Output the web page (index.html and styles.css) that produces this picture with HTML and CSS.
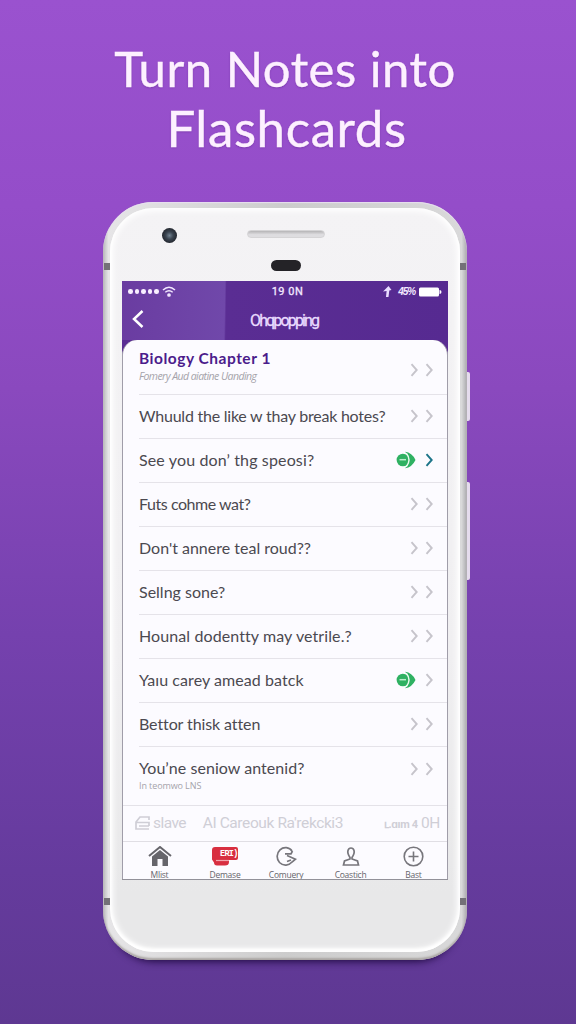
FILE: index.html
```html
<!DOCTYPE html>
<html lang="en">
<head>
<meta charset="utf-8">
<title>Turn Notes into Flashcards</title>
<link rel="stylesheet" href="styles.css">
</head>
<body>
<svg class="defs" width="0" height="0">
  <symbol id="chev" viewBox="0 0 9 14"><path d="M1.500 1.200 6.700 7l-5.200 5.800" fill="none" stroke="currentColor" stroke-width="1.900"/></symbol>
  <symbol id="done" viewBox="0 0 20 18"><path d="M9 .8q7 .7 10.500 8.200Q16 16.500 9 17.200 13 14 13 9T9 .8z" fill="#2fb162"/><circle cx="6.900" cy="9" r="6.300" fill="#2fb162"/><path d="M3.500 8.700h6.500" stroke="#bcebcc" stroke-width="1.500"/><path d="M10.300 2.300q5.400 6.700 0 13.400" fill="none" stroke="#e9faee" stroke-width="1.400"/></symbol>
</svg>
<main class="page">
  <h1 class="headline"><span class="h-a">Turn Notes into</span><span class="h-b">Flashcards</span></h1>
  <div class="phone">
    <i class="band tl"></i><i class="band tr"></i><i class="band bl"></i><i class="band br"></i>
    <i class="key power"></i><i class="key volume"></i>
    <div class="face">
      <i class="camera"></i><i class="speaker"></i><i class="sensor"></i>
      <section class="screen">
        <header class="top">
          <div class="status">
            <div class="signal"><i></i><i></i><i></i><i></i><i></i>
              <svg width="14" height="11" viewBox="0 0 14 11" fill="none" stroke="#f3e9ff" stroke-width="1.500"><path d="M1 4Q7-1.500 13 4M3.300 6.300q3.700-3.200 7.400 0"/><circle cx="7" cy="9" r="1.100" fill="#f3e9ff"/></svg>
            </div>
            <span class="clock">19 0N</span>
            <div class="power-info">
              <svg width="9" height="11" viewBox="0 0 9 11"><path d="M5.500 0 8.500 4 6.300 4.500 5.500 11H3l.6-6L0 5.500z" fill="#e9dcff"/></svg>
              <span class="pct">45%</span>
              <svg width="23" height="10" viewBox="0 0 23 10" fill="#fff"><rect width="20" height="9" y=".5" rx="1.500"/><path d="M20.500 3q2 0 2 2t-2 2z"/></svg>
            </div>
          </div>
          <div class="nav">
            <svg class="back" width="12" height="18" viewBox="0 0 12 18"><path d="M10.500 1 2 9l8.500 8" fill="none" stroke="#fff" stroke-width="2.500"/></svg>
            <span class="nav-title">Ohqpopping</span>
          </div>
        </header>
        <div class="sheet">
          <div class="row first"><div class="copy"><b class="deck">Biology Chapter 1</b><small class="sub s1">Fomery Aud aiatine Uanding</small></div><div class="ends"><svg class="chev"><use href="#chev"/></svg><svg class="chev"><use href="#chev"/></svg></div></div>
          <div class="row"><span class="q q1">Whuuld the like w thay break hotes?</span><div class="ends"><svg class="chev"><use href="#chev"/></svg><svg class="chev"><use href="#chev"/></svg></div></div>
          <div class="row"><span class="q q2">See you don’ thg speosi?</span><div class="ends"><svg class="done"><use href="#done"/></svg><svg class="chev teal"><use href="#chev"/></svg></div></div>
          <div class="row"><span class="q q3">Futs cohme wat?</span><div class="ends"><svg class="chev"><use href="#chev"/></svg><svg class="chev"><use href="#chev"/></svg></div></div>
          <div class="row"><span class="q q4">Don't annere teal roud??</span><div class="ends"><svg class="chev"><use href="#chev"/></svg><svg class="chev"><use href="#chev"/></svg></div></div>
          <div class="row"><span class="q q5">Sellng sone?</span><div class="ends"><svg class="chev"><use href="#chev"/></svg><svg class="chev"><use href="#chev"/></svg></div></div>
          <div class="row"><span class="q q6">Hounal dodentty may vetrile.?</span><div class="ends"><svg class="chev"><use href="#chev"/></svg><svg class="chev"><use href="#chev"/></svg></div></div>
          <div class="row"><span class="q q7">Yaıu carey amead batck</span><div class="ends"><svg class="done"><use href="#done"/></svg><svg class="chev"><use href="#chev"/></svg></div></div>
          <div class="row"><span class="q q8">Bettor thisk atten</span><div class="ends"><svg class="chev"><use href="#chev"/></svg><svg class="chev"><use href="#chev"/></svg></div></div>
          <div class="row last"><div class="copy"><span class="q q9">You’ne seniow antenid?</span><small class="sub s2">In teomwo LNS</small></div><div class="ends"><svg class="chev"><use href="#chev"/></svg><svg class="chev"><use href="#chev"/></svg></div></div>
          <div class="tools">
            <svg width="17" height="16" viewBox="0 0 17 16" fill="none" stroke="#cfced6" stroke-width="1.700"><path d="M15 5V2H6L2 7v7h13M2 7.500h13V11M5 11h10"/></svg>
            <span class="save">sIave</span><span class="career">AI Careouk Ra'rekcki3</span><span class="count"><b>ւ.ɑım 4</b> 0H</span>
          </div>
          <nav class="tabs">
            <div class="tab"><svg width="24" height="21" viewBox="0 0 24 21"><path d="M1 10 12 1l11 9" fill="none" stroke="#66656b" stroke-width="2"/><path d="M4 10.500 12 4l8 6.500V20h-5.500v-7h-5v7H4z" fill="#66656b"/></svg><span>Mlist</span></div>
            <div class="tab"><svg width="28" height="21" viewBox="0 0 28 21"><path d="M4 1h21q2 0 2 2v9q0 2-2 2h-7v2q0 3.500-4 3.500H6q-3 0-3-3l-2-3V4q0-3 3-3z" fill="#d82f40"/><path d="M5 14.500h13" stroke="#f3a5ad" stroke-width="1.200"/><text class="badge" x="9" y="10">ERI)</text></svg><span>Demase</span></div>
            <div class="tab"><svg width="22" height="21" viewBox="0 0 22 21" fill="none" stroke="#77767c" stroke-width="1.700"><path d="M17 5C14.500 1 8.500.5 5 3.800S1.200 13 4.500 16.500c4 4 9.500 3 12.500-.5l3.500-2.800L12 9.500M10 7.800h6L17.500 5M12 15.500l4-1.500"/></svg><span>Comuery</span></div>
            <div class="tab"><svg width="20" height="21" viewBox="0 0 20 21" fill="none" stroke="#77767c" stroke-width="1.700"><path d="M9 11.500C4.800 5.500 7.500 2 10 2s5.200 3.500 1 9.500v1.500l5.500 2 1 4H2.500l1-4L9 13z"/></svg><span>Coastich</span></div>
            <div class="tab"><svg width="21" height="21" viewBox="0 0 21 21" fill="none" stroke="#77767c" stroke-width="1.600"><circle cx="10.500" cy="10.500" r="9.300"/><path d="M5.500 10.500h10M10.500 5.500v10"/></svg><span>Bast</span></div>
          </nav>
        </div>
      </section>
    </div>
  </div>
</main>
</body>
</html>
```
FILE: styles.css
```css
* { box-sizing: border-box; }
body { margin: 0; font-family: Lato, "Open Sans", sans-serif; }
.defs { position: absolute; }
.page { width: 576px; height: 1024px; overflow: hidden; display: flex; flex-direction: column; align-items: center; background: linear-gradient(#9a52cf, #944dc9 20%, #8a49be 38%, #7541ae 62%, #653b9d 85%, #5e3892); }
.headline { margin: 0; padding-top: 39px; height: 202px; display: flex; flex-direction: column; align-items: center; font-size: 49px; font-weight: 400; line-height: 59px; color: #fdf0ff; -webkit-text-stroke: .4px #fdf0ff; text-shadow: 0 1px 2px rgba(80,25,125,.4); white-space: nowrap; }
.h-a { letter-spacing: .5px; margin-right: 6px; }
.h-b { letter-spacing: .6px; font-size: 51px; margin-right: 3px; }
.phone { position: relative; flex: none; width: 364px; height: 758px; margin-right: 6px; padding: 6px 7px 8px; border-radius: 50px; background: linear-gradient(90deg, #b9b9bb, #e6e5e7 1.500%, #ccc 50%, #d9d9da 98.500%, #aaa9ae); box-shadow: inset 0 1px 1px #e8dff0, inset 0 -2px 2px #aaa6a3, 0 12px 8px -11px #180537; }
.face { position: relative; height: 744px; padding: 73px 12px 0; border-radius: 44px; background: linear-gradient(#f4f3f5, #f0eff1 60%, #e8e8e9 92%); box-shadow: inset 0 0 6px 3px #fff, inset 0 -2px 3px 1px #fff; }
.band { position: absolute; width: 6px; height: 7px; background: #737177; }
.tl { left: 1px; top: 61px; } .tr { right: 1px; top: 61px; }
.bl { left: 1px; bottom: 55px; } .br { right: 1px; bottom: 55px; }
.key { position: absolute; right: -3px; width: 3px; background: #e5dced; border-radius: 0 2px 2px 0; }
.power { top: 170px; height: 49px; } .volume { top: 280px; height: 98px; }
.camera { position: absolute; left: 52px; top: 20px; width: 15px; height: 15px; border-radius: 50%; background: radial-gradient(circle, #738391 0, #3b4551 35%, #242830 70%); }
.speaker { position: absolute; left: 137px; top: 22px; width: 78px; height: 8px; border-radius: 4px; background: linear-gradient(#b5b4b6, #dedde0 60%); border: 1px solid #d5d4d6; }
.sensor { position: absolute; left: 161px; top: 52px; width: 30px; height: 11px; border-radius: 6px; background: #242327; }
.screen { width: 326px; height: 599px; display: flex; flex-direction: column; overflow: hidden; background: #5a2d93; border-bottom: 1px solid #929199; }
.top { height: 59px; flex: none; background: linear-gradient(91deg, #6a3ca1, #7048aa 31.500%, #5a2d93 32%, #562a91); }
.status { height: 21px; display: grid; grid-template-columns: 1fr auto 1fr; align-items: center; padding: 0 6px; color: #f3e9ff; }
.signal { display: flex; align-items: center; gap: 2px; }
.signal i { width: 4.600px; height: 4.600px; border-radius: 50%; background: #f8efff; }
.signal svg { margin-left: 1px; }
.clock { font: 11px Roboto, sans-serif; letter-spacing: .5px; margin-left: 5px; -webkit-text-stroke: .3px #f3e9ff; }
.power-info { display: flex; justify-content: flex-end; align-items: center; gap: 6px; }
.pct { font: italic bold 10px "Liberation Sans", sans-serif; letter-spacing: -1.100px; margin-right: -2px; }
.nav { height: 37px; display: grid; grid-template-columns: 100px 1fr 100px; align-items: center; padding-left: 10px; }
.back { margin-top: -4px; }
.nav-title { color: #eadcff; font: 16px Roboto, sans-serif; -webkit-text-stroke: .3px #eadcff; letter-spacing: -1.850px; white-space: nowrap; padding: 0 0 0 18px; }
.sheet { flex: 1; display: flex; flex-direction: column; background: #fcfbff; border-radius: 15px 15px 0 0; border: 1.500px solid #a09da9; border-top: 0; border-bottom: 0; }
.row { height: 43.950px; flex: none; margin-left: 16px; padding-right: 13px; display: flex; align-items: center; justify-content: space-between; border-bottom: 1px solid #e5e3e9; white-space: nowrap; }
.first { height: 55px; }
.last { height: 58px; align-items: flex-start; padding-top: 11px; border-bottom: 0; }
.last .ends { padding-top: 4px; }
.copy { display: flex; flex-direction: column; }
.first .ends { padding-top: 5px; }
.deck { font-size: 15.500px; line-height: 19px; color: #4b1b8b; letter-spacing: .52px; }
.sub { font: 10.500px/16px "Open Sans", sans-serif; color: #a5a3aa; }
.s1 { letter-spacing: -.55px; font-style: italic; line-height: 17px; }
.s2 { font-size: 9px; letter-spacing: -.1px; line-height: 15px; }
.q { font-size: 16px; line-height: 20px; color: #4b4950; }
.q1 { letter-spacing: -.23px; }
.q2 { letter-spacing: .14px; }
.q3 { letter-spacing: -.45px; }
.q6 { letter-spacing: .1px; }
.q7 { letter-spacing: .07px; }
.q8 { letter-spacing: -.1px; }
.q9 { letter-spacing: .05px; }
.ends { display: flex; align-items: center; gap: 6px; }
.chev { width: 9px; height: 14px; color: #c6c4cb; }
.teal { color: #1b7488; }
.done { width: 20px; height: 18px; margin-right: 3px; }
.tools { height: 37px; flex: none; display: flex; align-items: center; padding: 0 7px 0 11px; border-top: 1px solid #e4e2e8; border-bottom: 1px solid #e0dee4; color: #cfced6; font: 15.500px Roboto, sans-serif; white-space: nowrap; }
.save { margin-left: 2px; letter-spacing: -.7px; } .career { margin-left: 17px; letter-spacing: -.4px; }
.count { margin-left: auto; letter-spacing: -.4px; } .count b { font-size: 11px; }
.tabs { height: 38px; display: grid; grid-template-columns: 73px 58px 64px 65px 61px; overflow: hidden; }
.tab { display: flex; flex-direction: column; align-items: center; padding-top: 4px; font: 8.500px/11px "Open Sans", sans-serif; letter-spacing: -.25px; color: #66656b; }
.tab svg { flex: none; margin-bottom: 2px; }
.badge { font: bold 8.500px "Liberation Mono", monospace; letter-spacing: -.7px; fill: #fff; }
```
